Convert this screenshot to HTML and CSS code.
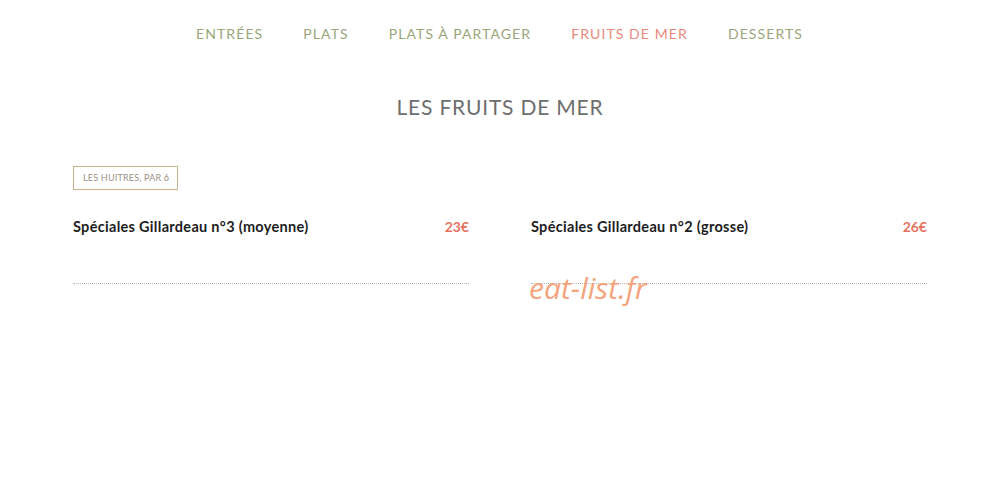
FILE: index.html
```html
<!DOCTYPE html>
<html lang="fr">
<head>
<meta charset="utf-8">
<title>Les fruits de mer</title>
<link rel="stylesheet" href="styles.css">
</head>
<body>
  <nav class="menu-nav">
    <a class="nav-link" href="#">Entrées</a>
    <a class="nav-link" href="#">Plats</a>
    <a class="nav-link" href="#">Plats à partager</a>
    <a class="nav-link active" href="#">Fruits de mer</a>
    <a class="nav-link" href="#">Desserts</a>
  </nav>

  <main class="section">
    <h1 class="section-title">Les fruits de mer</h1>

    <div class="group">
      <span class="group-tag">Les huitres, par 6</span>
      <div class="items">
        <div class="item">
          <span class="item-name">Spéciales Gillardeau n°3 (moyenne)</span>
          <span class="item-price">23€</span>
        </div>
        <div class="item">
          <span class="item-name">Spéciales Gillardeau n°2 (grosse)</span>
          <span class="item-price">26€</span>
        </div>
      </div>
    </div>

    <p class="site-mark">eat-list.fr</p>
  </main>
</body>
</html>
```

FILE: styles.css
```css
* {
  box-sizing: border-box;
}

html,
body {
  min-height: 100vh;
}

body {
  margin: 0;
  background: #ffffff;
  font-family: "Lato", "Noto Sans", sans-serif;
  color: #1f1f1f;
}

.menu-nav {
  display: flex;
  justify-content: center;
  gap: 40px;
  padding-top: 25px;
  padding-left: 10px;
}

.nav-link {
  color: #9aa67a;
  text-decoration: none;
  text-transform: uppercase;
  font-size: 14px;
  font-weight: 400;
  letter-spacing: 1.1px;
  line-height: 18px;
}

.nav-link.active {
  color: #e8887b;
}

.section {
  position: relative;
  padding: 0 62px 0 73px;
}

.section-title {
  margin: 0;
  padding-top: 51px;
  text-align: center;
  font-size: 21px;
  font-weight: 400;
  letter-spacing: 0.8px;
  text-transform: uppercase;
  color: #6e6e6e;
  line-height: 26px;
}

.group {
  padding-top: 45px;
}

.group-tag {
  display: inline-block;
  border: 1px solid #c9b18e;
  padding: 5px 8px 6px 9px;
  font-size: 9px;
  line-height: 11px;
  text-transform: uppercase;
  color: #9a8f84;
  letter-spacing: 0.2px;
}

.items {
  display: grid;
  grid-template-columns: 396px 396px;
  column-gap: 62px;
  padding-top: 28px;
}

.item {
  display: flex;
  justify-content: space-between;
  align-items: baseline;
  height: 66px;
  border-bottom: 1px dotted #b5b5b5;
}

.item-name {
  font-size: 14.5px;
  font-weight: 700;
  color: #1d1d1d;
  letter-spacing: 0.3px;
}

.item-price {
  font-size: 14px;
  font-weight: 700;
  color: #e5735e;
}

/* site signature laid over the price list */
.site-mark {
  position: absolute;
  left: 529px;
  top: 225px;
  margin: 0;
  font-family: "Open Sans", sans-serif;
  font-style: italic;
  font-weight: 400;
  font-size: 30px;
  line-height: 40px;
  color: #f4a47d;
}
```
